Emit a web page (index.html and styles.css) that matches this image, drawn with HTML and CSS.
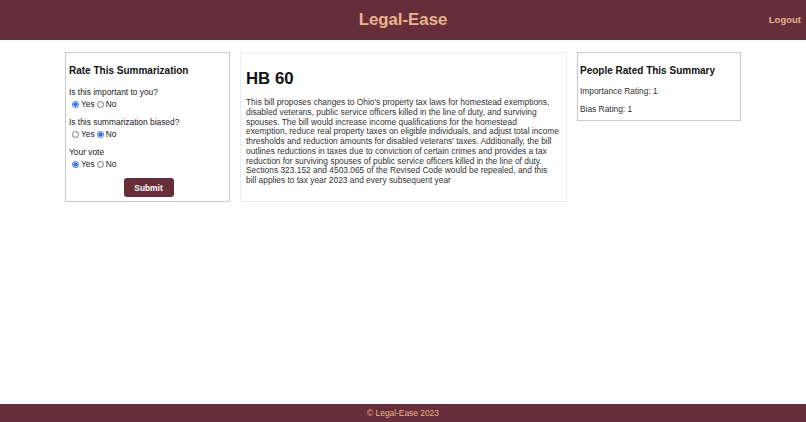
FILE: index.html
```html
<!DOCTYPE html>
<html lang="en">
<head>
<meta charset="utf-8">
<title>Legal-Ease</title>
<link rel="stylesheet" href="styles.css">
</head>
<body>
<header class="topbar">
  <div class="brand">Legal-Ease</div>
  <a class="logout" href="#">Logout</a>
</header>

<main class="layout">
  <section class="card rate-card">
    <h3 class="card-title">Rate This Summarization</h3>
    <form class="rate-form">
      <div class="question">
        <p class="question-label">Is this important to you?</p>
        <div class="choices">
          <label><input type="radio" name="important" checked> Yes</label>
          <label><input type="radio" name="important"> No</label>
        </div>
      </div>
      <div class="question">
        <p class="question-label">Is this summarization biased?</p>
        <div class="choices">
          <label><input type="radio" name="biased"> Yes</label>
          <label><input type="radio" name="biased" checked> No</label>
        </div>
      </div>
      <div class="question">
        <p class="question-label">Your vote</p>
        <div class="choices">
          <label><input type="radio" name="vote" checked> Yes</label>
          <label><input type="radio" name="vote"> No</label>
        </div>
      </div>
      <div class="actions">
        <button type="button" class="submit">Submit</button>
      </div>
    </form>
  </section>

  <article class="card bill-card">
    <h1 class="bill-title">HB 60</h1>
    <p class="bill-summary">This bill proposes changes to Ohio's property tax laws for homestead exemptions, disabled veterans, public service officers killed in the line of duty, and surviving spouses. The bill would increase income qualifications for the homestead exemption, reduce real property taxes on eligible individuals, and adjust total income thresholds and reduction amounts for disabled veterans' taxes. Additionally, the bill outlines reductions in taxes due to conviction of certain crimes and provides a tax reduction for surviving spouses of public service officers killed in the line of duty. Sections 323.152 and 4503.065 of the Revised Code would be repealed, and this bill applies to tax year 2023 and every subsequent year</p>
  </article>

  <aside class="card stats-card">
    <h3 class="card-title">People Rated This Summary</h3>
    <p class="stat">Importance Rating: 1</p>
    <p class="stat">Bias Rating: 1</p>
  </aside>
</main>

<footer class="site-footer">© Legal-Ease 2023</footer>
</body>
</html>
```

FILE: styles.css
```css
* {
  box-sizing: border-box;
}

html, body {
  height: 100%;
}

body {
  margin: 0;
  display: flex;
  flex-direction: column;
  min-height: 100vh;
  font-family: "Liberation Sans", Arial, sans-serif;
  color: #222;
  background: #fff;
}

/* top bar */
.topbar {
  position: relative;
  height: 40px;
  background: #652e38;
  display: flex;
  align-items: center;
  justify-content: center;
}

.brand {
  color: #e9b48f;
  font-weight: bold;
  font-size: 16.8px;
  line-height: 20px;
}

.logout {
  position: absolute;
  right: 5px;
  top: 14px;
  color: #e9b48f;
  font-weight: bold;
  font-size: 9.5px;
  line-height: 11px;
  text-decoration: none;
}

/* three columns */
.layout {
  width: 676px;
  margin: 12px auto 0;
  display: grid;
  grid-template-columns: 165px 327px 164px;
  column-gap: 10px;
  align-items: start;
}

.card {
  background: #fff;
  border: 1px solid #cbcbcb;
}

.card-title {
  margin: 12px 0 0;
  font-size: 10px;
  line-height: 12px;
  font-weight: bold;
  color: #111;
}

/* rating form */
.rate-card {
  padding: 0 3px 4px;
}

.rate-form {
  margin-top: 10px;
  font-size: 8.4px;
  line-height: 10px;
  color: #222;
}

.question {
  margin-bottom: 8px;
}

.question-label {
  margin: 0 0 2px;
}

.choices {
  display: flex;
  gap: 2px;
  padding-left: 3px;
}

.choices label {
  display: flex;
  align-items: center;
}

.choices input {
  width: 7px;
  height: 7px;
  margin: 0 2px 0 0;
  accent-color: #2f6fe0;
}

.actions {
  display: flex;
  justify-content: center;
  padding-left: 2px;
  padding-top: 1px;
}

.submit {
  width: 50px;
  height: 19px;
  border: none;
  border-radius: 3px;
  background: #652e38;
  color: #fff;
  font-family: "Liberation Sans", Arial, sans-serif;
  font-weight: bold;
  font-size: 8.4px;
  padding: 0;
}

/* bill summary */
.bill-card {
  border-color: #ececec;
  padding: 0 6px 0 5px;
  min-height: 150px;
}

.bill-title {
  margin: 16px 0 0;
  font-size: 16.8px;
  line-height: 20px;
  font-weight: bold;
  color: #111;
}

.bill-summary {
  margin: 9px 0 0;
  width: 313.4px;
  font-size: 8.4px;
  line-height: 9.75px;
  color: #333;
}

/* rating totals */
.stats-card {
  padding: 0 2px 6px;
}

.stat {
  margin: 9px 0 0;
  font-size: 8.4px;
  line-height: 10px;
  color: #333;
}

.stat + .stat {
  margin-top: 8px;
}

/* footer */
.site-footer {
  margin-top: auto;
  height: 18px;
  background: #652e38;
  color: #e9b48f;
  font-size: 8.4px;
  line-height: 18px;
  text-align: center;
}
```
